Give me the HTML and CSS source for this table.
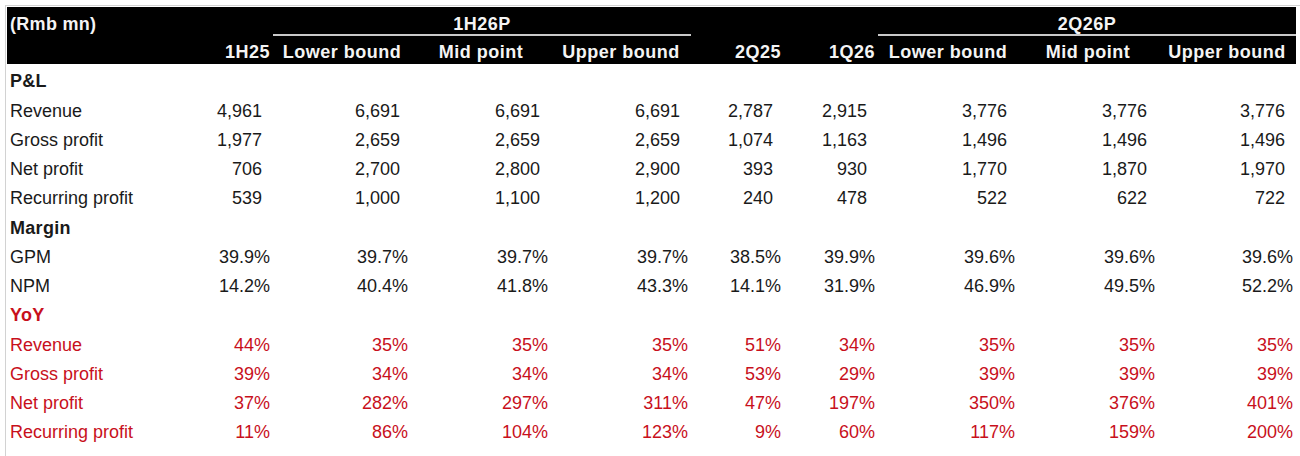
FILE: index.html
```html
<!DOCTYPE html>
<html lang="en">
<head>
<meta charset="utf-8">
<title>Guidance table</title>
<link rel="stylesheet" href="styles.css">
</head>
<body>
<div class="frame">
<table class="fin">
<colgroup>
<col class="c-label"><col class="c-q"><col class="c-lb"><col class="c-b"><col class="c-b"><col class="c-q"><col class="c-q2"><col class="c-b"><col class="c-b"><col class="c-lb">
</colgroup>
<thead>
<tr class="h1">
<th class="lbl">(Rmb mn)</th><th></th><th colspan="3" class="grp">1H26P</th><th></th><th></th><th colspan="3" class="grp">2Q26P</th>
</tr>
<tr class="h2">
<th></th><th class="r">1H25</th><th class="c">Lower bound</th><th class="c">Mid point</th><th class="c">Upper bound</th><th class="r">2Q25</th><th class="r">1Q26</th><th class="c">Lower bound</th><th class="c">Mid point</th><th class="c">Upper bound</th>
</tr>
</thead>
<tbody>
<tr class="sec"><td>P&amp;L</td><td></td><td></td><td></td><td></td><td></td><td></td><td></td><td></td><td></td></tr>
<tr><td>Revenue</td><td class="n">4,961</td><td class="n">6,691</td><td class="n">6,691</td><td class="n">6,691</td><td class="n">2,787</td><td class="n">2,915</td><td class="n">3,776</td><td class="n">3,776</td><td class="n">3,776</td></tr>
<tr><td>Gross profit</td><td class="n">1,977</td><td class="n">2,659</td><td class="n">2,659</td><td class="n">2,659</td><td class="n">1,074</td><td class="n">1,163</td><td class="n">1,496</td><td class="n">1,496</td><td class="n">1,496</td></tr>
<tr><td>Net profit</td><td class="n">706</td><td class="n">2,700</td><td class="n">2,800</td><td class="n">2,900</td><td class="n">393</td><td class="n">930</td><td class="n">1,770</td><td class="n">1,870</td><td class="n">1,970</td></tr>
<tr><td>Recurring profit</td><td class="n">539</td><td class="n">1,000</td><td class="n">1,100</td><td class="n">1,200</td><td class="n">240</td><td class="n">478</td><td class="n">522</td><td class="n">622</td><td class="n">722</td></tr>
<tr class="sec"><td>Margin</td><td></td><td></td><td></td><td></td><td></td><td></td><td></td><td></td><td></td></tr>
<tr><td>GPM</td><td class="p">39.9%</td><td class="p">39.7%</td><td class="p">39.7%</td><td class="p">39.7%</td><td class="p">38.5%</td><td class="p">39.9%</td><td class="p">39.6%</td><td class="p">39.6%</td><td class="p">39.6%</td></tr>
<tr><td>NPM</td><td class="p">14.2%</td><td class="p">40.4%</td><td class="p">41.8%</td><td class="p">43.3%</td><td class="p">14.1%</td><td class="p">31.9%</td><td class="p">46.9%</td><td class="p">49.5%</td><td class="p">52.2%</td></tr>
<tr class="sec red"><td>YoY</td><td></td><td></td><td></td><td></td><td></td><td></td><td></td><td></td><td></td></tr>
<tr class="red"><td>Revenue</td><td class="p">44%</td><td class="p">35%</td><td class="p">35%</td><td class="p">35%</td><td class="p">51%</td><td class="p">34%</td><td class="p">35%</td><td class="p">35%</td><td class="p">35%</td></tr>
<tr class="red"><td>Gross profit</td><td class="p">39%</td><td class="p">34%</td><td class="p">34%</td><td class="p">34%</td><td class="p">53%</td><td class="p">29%</td><td class="p">39%</td><td class="p">39%</td><td class="p">39%</td></tr>
<tr class="red"><td>Net profit</td><td class="p">37%</td><td class="p">282%</td><td class="p">297%</td><td class="p">311%</td><td class="p">47%</td><td class="p">197%</td><td class="p">350%</td><td class="p">376%</td><td class="p">401%</td></tr>
<tr class="red"><td>Recurring profit</td><td class="p">11%</td><td class="p">86%</td><td class="p">104%</td><td class="p">123%</td><td class="p">9%</td><td class="p">60%</td><td class="p">117%</td><td class="p">159%</td><td class="p">200%</td></tr>
</tbody>
</table>
</div>
</body>
</html>
```

FILE: styles.css
```css
html, body {
  margin: 0;
  padding: 0;
  background: #ffffff;
  overflow: hidden;
}

body {
  width: 1300px;
  height: 456px;
  font-family: "Liberation Sans", Arial, sans-serif;
  font-size: 18px;
  color: #1a1a1a;
}

.frame {
  margin: 5px 0 0 5px;
  height: 451px;
  box-sizing: border-box;
  border-top: 1px solid #d2d2d2;
  border-left: 1px solid #d2d2d2;
  padding: 1px 0 0 1px;
}

.fin {
  table-layout: fixed;
  border-collapse: separate;
  border-spacing: 0;
  width: 1289px;
}

.c-label { width: 173px; }
.c-q { width: 93px; }
.c-q2 { width: 94px; }
.c-lb { width: 138px; }
.c-b { width: 140px; }

.fin th,
.fin td {
  padding: 0 3px 2px 3px;
  line-height: 20px;
  vertical-align: bottom;
  white-space: nowrap;
  overflow: visible;
}

.fin thead th {
  background: #000000;
  color: #f4f4f4;
  font-weight: bold;
  letter-spacing: 0.5px;
  padding-bottom: 2px;
}

.fin .h1 th { height: 29px; box-sizing: border-box; }
.fin .h2 th { height: 28px; box-sizing: border-box; }

.fin thead .lbl { text-align: left; letter-spacing: 0.3px; }
.fin thead .grp {
  text-align: center;
  box-shadow: inset 0 -2px 0 #c9c9c9;
}
.fin thead .r { text-align: right; }
.fin thead .c { text-align: center; }

.fin tbody td {
  height: 29.25px;
  box-sizing: border-box;
  text-align: left;
}

.fin tbody td.n {
  text-align: right;
  padding-right: 11px;
}

.fin tbody td.p {
  text-align: right;
  padding-right: 3px;
}

.fin .sec td {
  font-weight: bold;
  letter-spacing: 0.3px;
}

.fin .red td {
  color: #c8101c;
}
```
